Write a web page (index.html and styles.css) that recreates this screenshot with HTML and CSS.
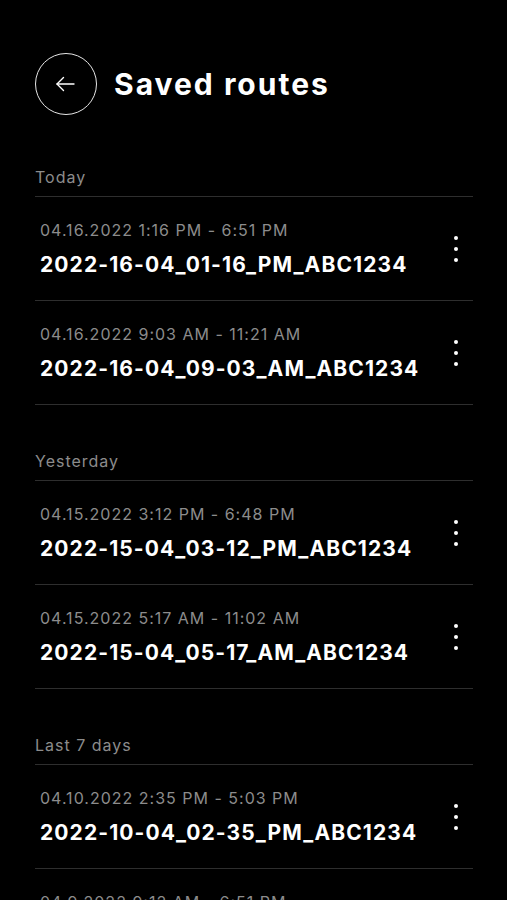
FILE: index.html
```html
<!DOCTYPE html>
<html lang="en">
<head>
<meta charset="utf-8">
<title>Saved routes</title>
<link rel="stylesheet" href="styles.css">
</head>
<body>
<div class="screen">
  <header class="topbar">
    <button class="back" aria-label="Back">
      <svg width="28" height="28" viewBox="0 0 28 28" fill="none" stroke="#fff" stroke-width="1.4" stroke-linecap="round" stroke-linejoin="round">
        <path d="M22 14H5"/>
        <path d="M11.5 7.5L5 14L11.5 20.5"/>
      </svg>
    </button>
    <h1 class="title">Saved routes</h1>
  </header>

  <main class="list">
    <section class="group">
      <h2 class="group-label">Today</h2>
      <div class="route">
        <div class="route-text">
          <div class="route-time">04.16.2022 1:16 PM - 6:51 PM</div>
          <div class="route-name">2022-16-04_01-16_PM_ABC1234</div>
        </div>
        <span class="kebab"><i></i><i></i><i></i></span>
      </div>
      <div class="route">
        <div class="route-text">
          <div class="route-time">04.16.2022 9:03 AM - 11:21 AM</div>
          <div class="route-name">2022-16-04_09-03_AM_ABC1234</div>
        </div>
        <span class="kebab"><i></i><i></i><i></i></span>
      </div>
    </section>

    <section class="group">
      <h2 class="group-label">Yesterday</h2>
      <div class="route">
        <div class="route-text">
          <div class="route-time">04.15.2022 3:12 PM - 6:48 PM</div>
          <div class="route-name">2022-15-04_03-12_PM_ABC1234</div>
        </div>
        <span class="kebab"><i></i><i></i><i></i></span>
      </div>
      <div class="route">
        <div class="route-text">
          <div class="route-time">04.15.2022 5:17 AM - 11:02 AM</div>
          <div class="route-name">2022-15-04_05-17_AM_ABC1234</div>
        </div>
        <span class="kebab"><i></i><i></i><i></i></span>
      </div>
    </section>

    <section class="group">
      <h2 class="group-label">Last 7 days</h2>
      <div class="route">
        <div class="route-text">
          <div class="route-time">04.10.2022 2:35 PM - 5:03 PM</div>
          <div class="route-name">2022-10-04_02-35_PM_ABC1234</div>
        </div>
        <span class="kebab"><i></i><i></i><i></i></span>
      </div>
      <div class="route">
        <div class="route-text">
          <div class="route-time">04.9.2022 9:12 AM - 6:51 PM</div>
          <div class="route-name">2022-09-04_09-12_AM_ABC1234</div>
        </div>
        <span class="kebab"><i></i><i></i><i></i></span>
      </div>
    </section>
  </main>
</div>
</body>
</html>
```

FILE: styles.css
```css
* { box-sizing: border-box; }
html, body {
  margin: 0;
  padding: 0;
  background: #000;
}
body {
  font-family: Inter, "Noto Sans", "Liberation Sans", sans-serif;
  color: #fff;
  overflow: hidden;
  height: 900px;
}
.screen {
  padding: 53px 34px 0 35px;
}
.topbar {
  display: flex;
  align-items: center;
  gap: 17px;
  height: 62px;
}
.back {
  width: 62px;
  height: 62px;
  border-radius: 50%;
  border: 1.5px solid #e6e6e6;
  background: transparent;
  display: flex;
  align-items: center;
  justify-content: center;
  padding: 0;
  flex: none;
}
.title {
  margin: 0;
  font-size: 30px;
  font-weight: 700;
  letter-spacing: 2px;
  line-height: 36px;
}
.list {
  display: flex;
  flex-direction: column;
  gap: 46px;
  margin-top: 52px;
}
.group-label {
  margin: 0;
  font-size: 16px;
  font-weight: 400;
  letter-spacing: 1px;
  color: #8c8c8c;
  line-height: 20px;
  padding-bottom: 9px;
  border-bottom: 1px solid #2e2e2e;
}
.route {
  display: flex;
  align-items: center;
  justify-content: space-between;
  padding: 23px 15px 23px 5px;
  border-bottom: 1px solid #2e2e2e;
}
.route-time {
  font-size: 16px;
  line-height: 20px;
  letter-spacing: 1px;
  color: #8c8c8c;
}
.route-name {
  margin-top: 13px;
  font-size: 21px;
  line-height: 24px;
  letter-spacing: 1.1px;
  font-weight: 700;
}
.kebab {
  display: flex;
  flex-direction: column;
  gap: 7px;
  width: 4px;
}
.kebab i {
  display: block;
  width: 4px;
  height: 4px;
  border-radius: 50%;
  background: #fff;
}
```
